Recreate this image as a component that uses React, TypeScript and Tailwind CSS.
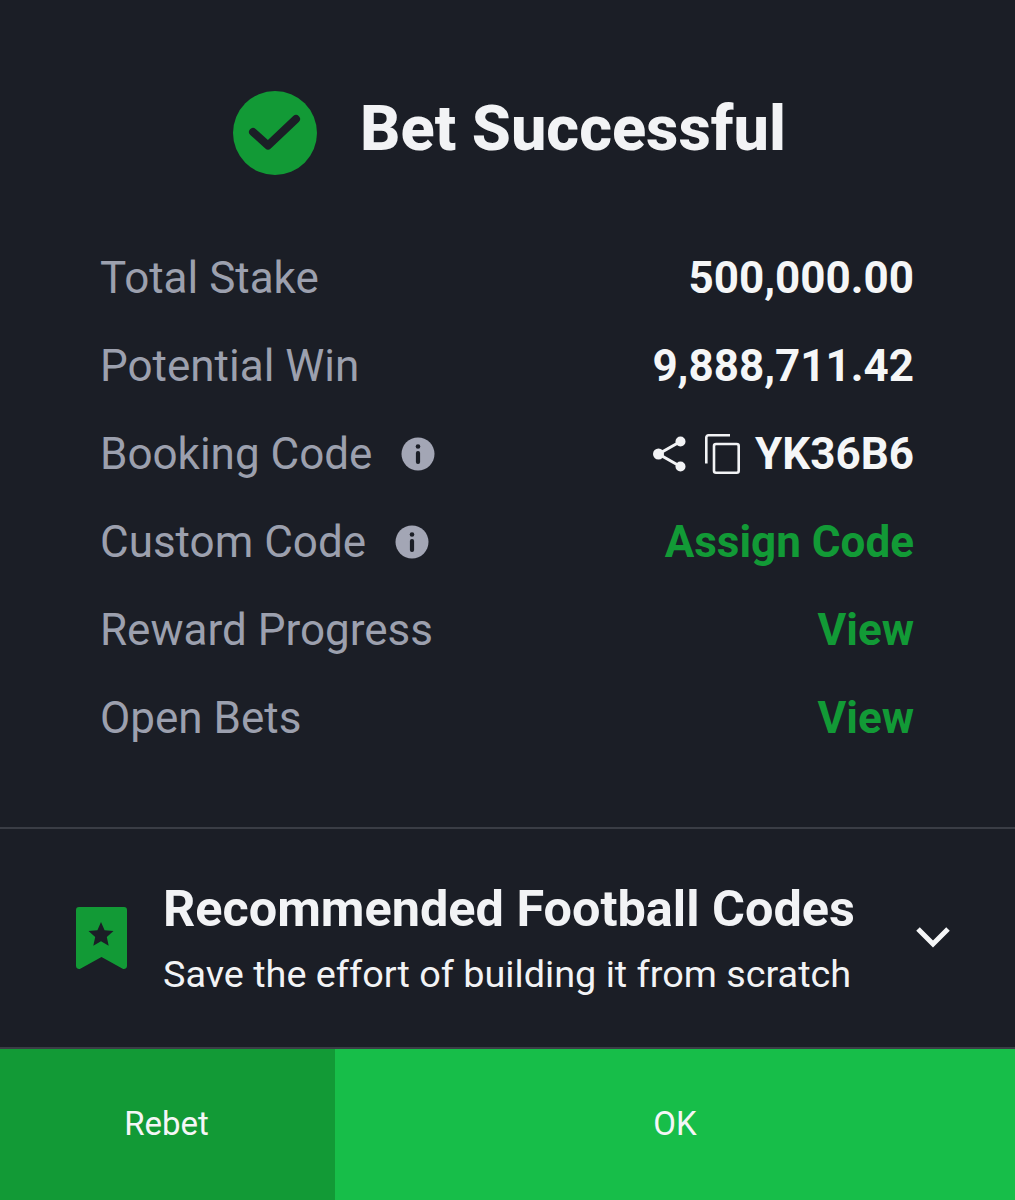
const rows = [
  {label: "Total Stake", value: "500,000.00"},
  {label: "Potential Win", value: "9,888,711.42"},
  {label: "Booking Code", value: "YK36B6", info: true, gap: "gap-[29px]", tools: true},
  {label: "Custom Code", value: "Assign Code", info: true, gap: "gap-[29px]", green: true},
  {label: "Reward Progress", value: "View", green: true},
  {label: "Open Bets", value: "View", green: true}
];

const InfoIcon = () => (
  <svg width="34" height="34" viewBox="0 0 34 34">
    <circle cx="17" cy="17" r="16.5" fill="#a3a6b5" />
    <circle cx="17" cy="9.500" r="2.300" fill="#1b1e26" />
    <rect x="14.900" y="14" width="4.200" height="13" rx="2" fill="#1b1e26" />
  </svg>
);

const ShareIcon = () => (
  <svg width="33" height="36" viewBox="0 0 33 36" fill="#f2f3f5" stroke="#f2f3f5">
    <path d="M27.500 5.500L5.500 18L27.500 30.500" fill="none" strokeWidth="3" />
    <circle cx="27.500" cy="5.500" r="5" strokeWidth="0" />
    <circle cx="5.500" cy="18" r="5.500" strokeWidth="0" />
    <circle cx="27.500" cy="30.500" r="5" strokeWidth="0" />
  </svg>
);

const CopyIcon = () => (
  <svg width="35" height="40" viewBox="0 0 35 40" fill="none" stroke="#f2f3f5" strokeWidth="2.600">
    <path d="M25 1.300H3.500a2.200 2.200 0 0 0-2.200 2.200v26" />
    <rect x="9" y="10" width="24.700" height="28.700" rx="2" />
  </svg>
);

const App = () => {
  return (
    <div className="w-[1015px] h-[1200px] bg-[#1b1e26] flex flex-col font-['Roboto',sans-serif]">
      {/* Header */}
      <div className="flex items-center pl-[233px] pt-[91px]">
        <svg width="84" height="84" viewBox="0 0 84 84">
          <circle cx="42" cy="42" r="42" fill="#129a36" />
          <path d="M20 41 L35 54.500 L63 28" fill="none" stroke="#1b1e26" strokeWidth="8" strokeLinecap="round" strokeLinejoin="round" />
        </svg>
        <h1 className="ml-[43px] mb-2 text-[63px] leading-[76px] font-extrabold text-[#f2f3f5]">Bet Successful</h1>
      </div>

      {/* Rows */}
      <div className="flex flex-col pl-[100px] pr-[101px] pt-[59px]">
        {rows.map(row => (
          <div key={row.label} className="flex justify-between items-center h-[88px] text-[44px]">
            <div className={`flex items-center ${row.gap || ""} text-[#9ca0ae]`}>
              <span>{row.label}</span>
              {row.info && <InfoIcon />}
            </div>
            <div className="flex items-center gap-[15px]">
              {row.tools && (
                <div className="flex items-center gap-[19px]">
                  <ShareIcon />
                  <CopyIcon />
                </div>
              )}
              <span className={`font-bold ${row.green ? "text-[#129a36]" : "text-[#f5f6f7]"}`}>{row.value}</span>
            </div>
          </div>
        ))}
      </div>

      {/* Recommended */}
      <div className="mt-[65px] h-[222px] border-t-2 border-b-2 border-[#3a3d45] flex items-center pl-[76px] pr-[65px]">
        <svg width="51" height="64" viewBox="0 0 51 64" className="shrink-0 mt-[2px]">
          <path d="M3 0H48a3 3 0 0 1 3 3V59a3 3 0 0 1-4.300 2.700L25.500 50 4.300 61.700A3 3 0 0 1 0 59V3a3 3 0 0 1 3-3Z" fill="#129a36" />
          <path d="M25 15l3.600 8.200 8.900.9-6.700 5.900 1.900 8.800L25 34.200 17.300 38.800l1.900-8.800-6.700-5.900 8.900-.9Z" fill="#1b1e26" />
        </svg>
        <div className="ml-9 pt-[2px] flex-1 flex flex-col">
          <span className="text-[50.400px] leading-[60px] font-bold text-[#f2f3f5]">Recommended Football Codes</span>
          <span className="mt-[10px] text-[37.800px] leading-[50px] text-[#f2f3f5]">Save the effort of building it from scratch</span>
        </div>
        <svg width="34" height="22" viewBox="0 0 34 22" fill="none" stroke="#f5f6f7" strokeWidth="5" className="mb-[2px]">
          <path d="M2 3 L17 18 L32 3" />
        </svg>
      </div>

      {/* Buttons */}
      <div className="flex flex-1 text-[33px] text-[#f5f6f7]">
        <button className="w-[335px] bg-[#129a36] pr-[2px] pb-[2px]">Rebet</button>
        <button className="flex-1 bg-[#17be49] pb-[2px]">OK</button>
      </div>
    </div>
  );
};

export default App;
